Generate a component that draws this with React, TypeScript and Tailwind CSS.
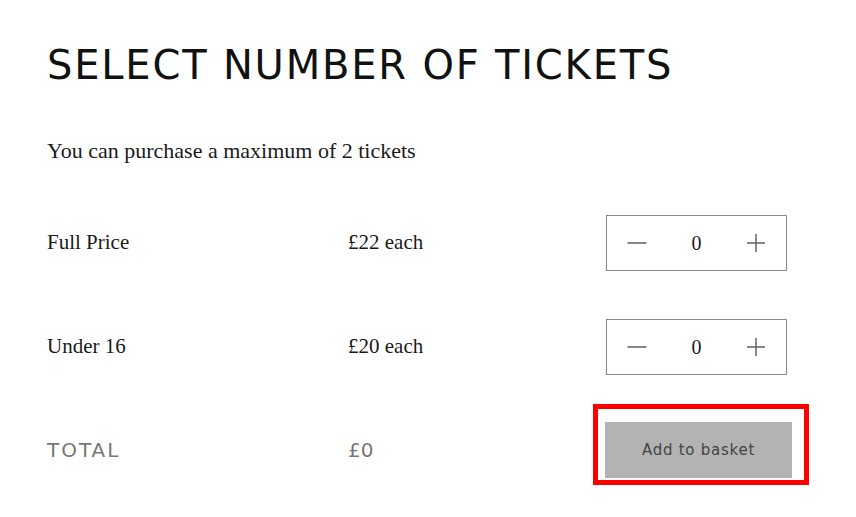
import React, { useState } from 'react';

const sans = { fontFamily: '"DejaVu Sans", "Open Sans", sans-serif' };
const serif = { fontFamily: '"Liberation Serif", "DejaVu Serif", serif' };

interface Ticket {
  key: string;
  label: string;
  price: number;
}

const TICKETS: Ticket[] = [
  { key: 'full', label: 'Full Price', price: 22 },
  { key: 'u16', label: 'Under 16', price: 20 },
];

const Minus = () => (
  <svg width="20" height="20" viewBox="0 0 20 20">
    <line x1="0.5" y1="10" x2="19.5" y2="10" stroke="#6b6b6b" strokeWidth="1.6" />
  </svg>
);

const Plus = () => (
  <svg width="20" height="20" viewBox="0 0 20 20">
    <line x1="1" y1="10" x2="19" y2="10" stroke="#6b6b6b" strokeWidth="1.6" />
    <line x1="10" y1="1" x2="10" y2="19" stroke="#6b6b6b" strokeWidth="1.6" />
  </svg>
);

const Stepper: React.FC<{ value: number; onChange: (v: number) => void }> = ({ value, onChange }) => (
  <div className="w-[181px] h-[56px] border border-[#8a8a8a] flex items-center justify-between pl-[20px] pr-[20px]">
    <button onClick={() => onChange(Math.max(0, value - 1))} className="flex items-center">
      <Minus />
    </button>
    <span style={serif} className="text-[20px] text-[#1a1a1a] leading-none">{value}</span>
    <button onClick={() => onChange(value + 1)} className="flex items-center">
      <Plus />
    </button>
  </div>
);

export default function App() {
  const [counts, setCounts] = useState<Record<string, number>>({ full: 0, u16: 0 });
  const total = TICKETS.reduce((sum, t) => sum + t.price * (counts[t.key] || 0), 0);

  return (
    <div className="w-[856px] h-[517px] bg-white pl-[47px] pt-[41px]">
      <h1 style={sans} className="text-[40px] leading-[48px] font-normal text-[#111] tracking-[0.045em]">
        SELECT NUMBER OF TICKETS
      </h1>

      <p style={serif} className="mt-[48px] text-[22px] leading-[28px] text-[#1a1a1a]">
        You can purchase a maximum of 2 tickets
      </p>

      <div className="mt-[50px] flex flex-col gap-[48px]">
        {TICKETS.map((t) => (
          <div key={t.key} className="flex items-center h-[56px]">
            <span style={serif} className="w-[301px] text-[21px] text-[#1a1a1a]">{t.label}</span>
            <span style={serif} className="w-[258px] text-[21px] text-[#1a1a1a]">£{t.price} each</span>
            <Stepper
              value={counts[t.key]}
              onChange={(v) => setCounts({ ...counts, [t.key]: v })}
            />
          </div>
        ))}

        <div className="flex items-center h-[56px] -mt-[1px]">
          <span style={sans} className="w-[301px] text-[20px] text-[#777] tracking-[0.1em]">TOTAL</span>
          <span style={sans} className="w-[258px] text-[20px] text-[#777]">£{total}</span>
          <div className="relative">
            <div className="absolute -left-[13px] -top-[18px] w-[216px] h-[81px] border-[5px] border-[#ff0000]" />
            <button style={sans} className="w-[187px] h-[56px] bg-[#b3b3b3] text-[15px] tracking-[0.05em] text-[#444] -ml-[1px]">
              Add to basket
            </button>
          </div>
        </div>
      </div>
    </div>
  );
}
